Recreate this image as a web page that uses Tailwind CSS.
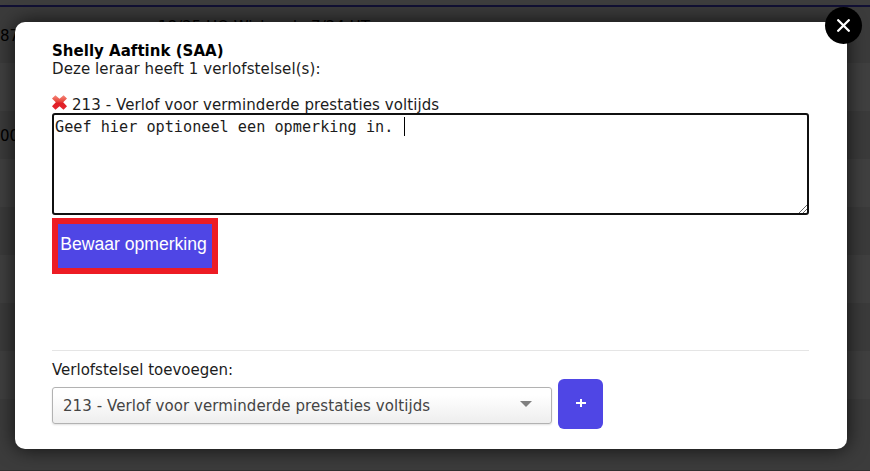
<!DOCTYPE html>
<html lang="nl">
<head>
<meta charset="utf-8">
<title>Verlofstelsels</title>
<script src="https://cdn.jsdelivr.net/npm/@tailwindcss/browser@4"></script>
</head>
<body class="relative h-[471px] w-[870px] overflow-hidden bg-[#3c3c3c] font-['DejaVu_Sans',Verdana,sans-serif] text-[15px] text-black">
<!-- Dimmed table behind the dialog -->
<div class="flex h-[471px] flex-col">
  <div class="h-[7px] shrink-0 border-b-2 border-[#111034] bg-[#3e3e3e]"></div>
  <div class="flex h-14 shrink-0 bg-[#3b3b3b]">
    <span class="w-[158px] pt-5 leading-[18px]">87</span>
    <span class="pt-[11px] leading-[18px]">18/25 HO Wiskunde 7/24 HT</span>
  </div>
  <div class="h-12 shrink-0 bg-[#404040]"></div>
  <div class="h-12 shrink-0 bg-[#3b3b3b] pt-4 leading-[18px]">00</div>
  <div class="h-12 shrink-0 bg-[#404040]"></div>
  <div class="h-12 shrink-0 bg-[#3b3b3b]"></div>
  <div class="h-12 shrink-0 bg-[#404040]"></div>
  <div class="h-12 shrink-0 bg-[#3b3b3b]"></div>
  <div class="h-12 shrink-0 bg-[#404040]"></div>
  <div class="flex-1 border-b border-[#303030] bg-[#3c3c3c]"></div>
</div>
<!-- Dialog -->
<div class="absolute left-[15px] top-[22px] flex h-[427px] w-[832px] flex-col rounded-[10px] bg-white px-[37px] pt-5 text-[#1c1c1c] shadow-[0_0_20px_rgba(0,0,0,0.75)]">
  <div class="h-[18px] whitespace-nowrap leading-[18px] text-black"><b class="text-[15px] tracking-[0.02px]">Shelly Aaftink (SAA)</b></div>
  <div class="h-[18px] whitespace-nowrap leading-[18px] tracking-[0.09px]">Deze leraar heeft 1 verlofstelsel(s):</div>
  <div class="mt-[18px] flex h-[17px] items-center whitespace-nowrap leading-[18px] tracking-[0.08px]">
    <svg class="-mt-[4px] mr-[5px] size-[15px] shrink-0" viewBox="0 0 15 15">
      <defs><linearGradient id="r" x1="0" y1="0" x2="0" y2="1"><stop offset="0" stop-color="#f4897b"/><stop offset=".4" stop-color="#ea4b40"/><stop offset=".55" stop-color="#e01f26"/><stop offset="1" stop-color="#e62630"/></linearGradient></defs>
      <path fill="url(#r)" d="M3.4.2 7.5 3.8 11.6.2 15 3.5 11.2 7.3 15 11.3 11.5 14.8 7.5 11.2 3.5 14.8 0 11.3 3.8 7.3 0 3.5Z"/>
    </svg>
    <span class="mt-px">213 - Verlof voor verminderde prestaties voltijds</span>
  </div>
  <div class="relative h-[102px] w-[757px] shrink-0 rounded-[3px] border-2 border-[#101010] px-px pt-[2px] font-['DejaVu_Sans_Mono',monospace] text-[15.2px] leading-[21px]">
    <div class="flex whitespace-pre">Geef hier optioneel een opmerking in. <span class="ml-[2px] h-[19px] w-px bg-black"></span></div>
    <svg class="absolute bottom-0 right-0 size-[9px]" viewBox="0 0 9 9" stroke="#555" stroke-width=".9"><path d="M1 9 9 1M5 9 9 5"/></svg>
  </div>
  <button class="mt-[3px] h-14 w-[166px] shrink-0 whitespace-nowrap border-[6px] border-[#ed1c24] bg-[#4f46e5] pb-1 pr-[3px] font-['Liberation_Sans',Arial,sans-serif] text-[17.6px] text-white"><span class="-mx-1">Bewaar opmerking</span></button>
  <div class="mt-[76px] h-px w-[757px] shrink-0 bg-[#e5e5e5]"></div>
  <div class="mt-[10px] h-[18px] whitespace-nowrap leading-[18px]">Verlofstelsel toevoegen:</div>
  <div class="flex items-center gap-[6px]">
    <div class="mt-[2px] flex h-[37px] w-[500px] items-center justify-between rounded-[3px] border border-[#b2b2b2] bg-linear-to-b from-white from-20% to-[#eeeeee] pl-[10px] pr-[19px] tracking-[0.08px] text-[#444] shadow-[0_1px_2px_rgba(0,0,0,0.12)]">
      <span class="pt-[2px]">213 - Verlof voor verminderde prestaties voltijds</span>
      <svg class="mb-[2px] h-[6px] w-3" viewBox="0 0 12 6"><path fill="#808080" d="M0 0h12L6 6Z"/></svg>
    </div>
    <button class="flex h-[50px] w-[45px] items-center justify-center rounded-[6px] bg-[#4f46e5]">
      <svg class="mb-[2px] size-[10px]" viewBox="0 0 10 10"><path d="M0 5h10M5 1v8" stroke="#fff" stroke-width="2"/></svg>
    </button>
  </div>
</div>
<button class="absolute left-[825px] top-[7px] flex size-[37px] items-center justify-center rounded-full bg-black">
  <svg class="size-[13px]" viewBox="0 0 13 13"><path d="m1.2 1.2 10.6 10.6M11.8 1.2 1.2 11.8" stroke="#fff" stroke-width="2.3" stroke-linecap="round"/></svg>
</button>
</body>
</html>
